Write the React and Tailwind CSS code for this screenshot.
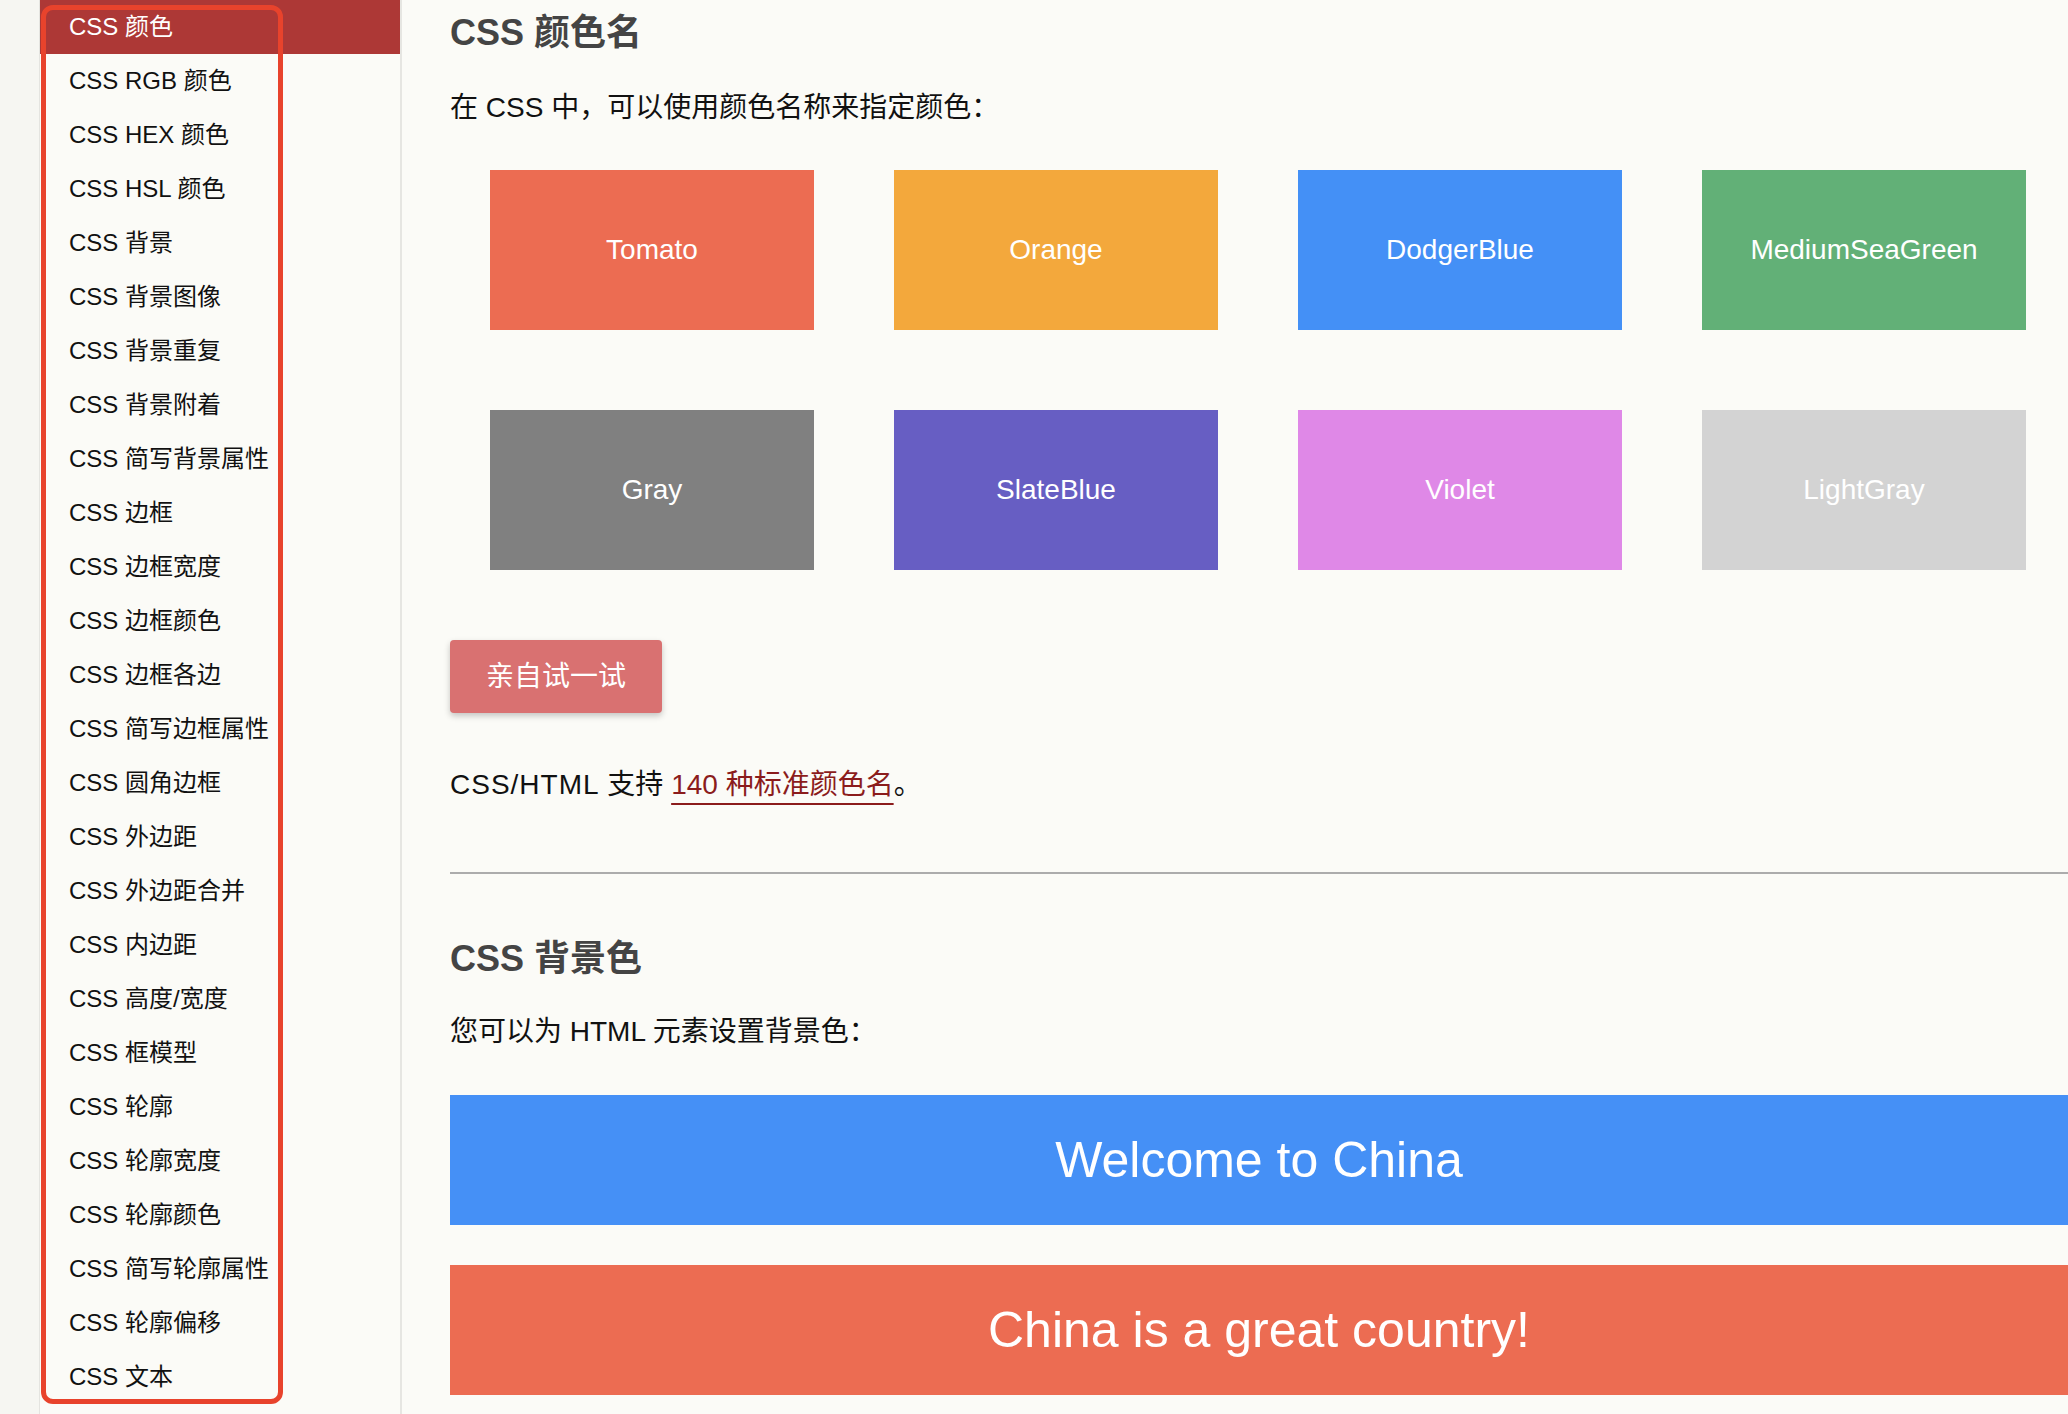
const font = { fontFamily: '"Liberation Sans", "Noto Sans CJK SC", sans-serif' };

const navItems = [
  'CSS 颜色',
  'CSS RGB 颜色',
  'CSS HEX 颜色',
  'CSS HSL 颜色',
  'CSS 背景',
  'CSS 背景图像',
  'CSS 背景重复',
  'CSS 背景附着',
  'CSS 简写背景属性',
  'CSS 边框',
  'CSS 边框宽度',
  'CSS 边框颜色',
  'CSS 边框各边',
  'CSS 简写边框属性',
  'CSS 圆角边框',
  'CSS 外边距',
  'CSS 外边距合并',
  'CSS 内边距',
  'CSS 高度/宽度',
  'CSS 框模型',
  'CSS 轮廓',
  'CSS 轮廓宽度',
  'CSS 轮廓颜色',
  'CSS 简写轮廓属性',
  'CSS 轮廓偏移',
  'CSS 文本',
];

const swatches = [
  { name: 'Tomato', cls: 'bg-[#ec6c52]' },
  { name: 'Orange', cls: 'bg-[#f3a83c]' },
  { name: 'DodgerBlue', cls: 'bg-[#4490f6]' },
  { name: 'MediumSeaGreen', cls: 'bg-[#62b077]' },
  { name: 'Gray', cls: 'bg-[#808080]' },
  { name: 'SlateBlue', cls: 'bg-[#675ec3]' },
  { name: 'Violet', cls: 'bg-[#df88e7]' },
  { name: 'LightGray', cls: 'bg-[#d3d3d3]' },
];

const Sidebar = () => (
  <aside className="w-[362px] shrink-0 border-r-2 border-[#e6e6e2] bg-[#fbfbf7]">
    {navItems.map((label, idx) => (
      <div
        key={label}
        className={`h-[54px] pl-[29px] flex items-center text-[24px] leading-none ${
          idx === 0 ? 'bg-[#ad3836] text-white' : 'text-[#111]'
        }`}
      >
        {label}
      </div>
    ))}
  </aside>
);

export default function App() {
  return (
    <div className="relative flex w-[2068px] h-[1414px] overflow-hidden bg-[#fbfbf7]" style={font}>
      {/* left gutter */}
      <div className="w-[40px] shrink-0 bg-[#f6f6f2] border-r border-[#e4e4e0]" />

      <Sidebar />

      {/* main content */}
      <main className="flex-1 pl-[48px] pt-[12px]">
        <h2 className="text-[36px] leading-[42px] font-bold text-[#444]">CSS 颜色名</h2>
        <p className="mt-[34px] text-[28px] leading-[40px] text-[#111]">在 CSS 中，可以使用颜色名称来指定颜色：</p>

        <div className="mt-[42px] ml-[40px] grid grid-cols-[repeat(4,324px)] gap-x-[80px] gap-y-[80px]">
          {swatches.map((s) => (
            <div key={s.name} className={`h-[160px] flex items-center justify-center text-white text-[28px] ${s.cls}`}>
              {s.name}
            </div>
          ))}
        </div>

        <button className="mt-[70px] w-[212px] h-[73px] rounded-[4px] bg-[#d97171] text-white text-[28px] shadow-[0_3px_6px_rgba(0,0,0,0.22)] flex items-center justify-center">
          亲自试一试
        </button>

        <p className="mt-[52px] text-[28px] leading-[40px] text-[#111]">
          <span className="tracking-[1px]">CSS/HTML</span> 支持{' '}
          <a className="text-[#8b1c1c] underline decoration-2 underline-offset-[9px] decoration-[#8b1c1c]">
            140 种标准颜色名
          </a>
          。
        </p>

        <hr className="mt-[67px] border-0 h-[2px] bg-[#acacac]" />

        <h2 className="mt-[64px] text-[36px] leading-[42px] font-bold text-[#444]">CSS 背景色</h2>
        <p className="mt-[32px] text-[28px] leading-[40px] text-[#111]">您可以为 HTML 元素设置背景色：</p>

        <div className="mt-[43px] h-[130px] bg-[#4590f6] flex items-center justify-center text-white text-[50px]">
          Welcome to China
        </div>
        <div className="mt-[40px] h-[130px] bg-[#ec6c52] flex items-center justify-center text-white text-[50px]">
          China is a great country!
        </div>
      </main>

      {/* red highlight annotation over the nav */}
      <div className="absolute left-[41px] top-[5px] w-[242px] h-[1399px] border-[5px] border-[#e8432c] rounded-[12px] pointer-events-none" />
    </div>
  );
}
